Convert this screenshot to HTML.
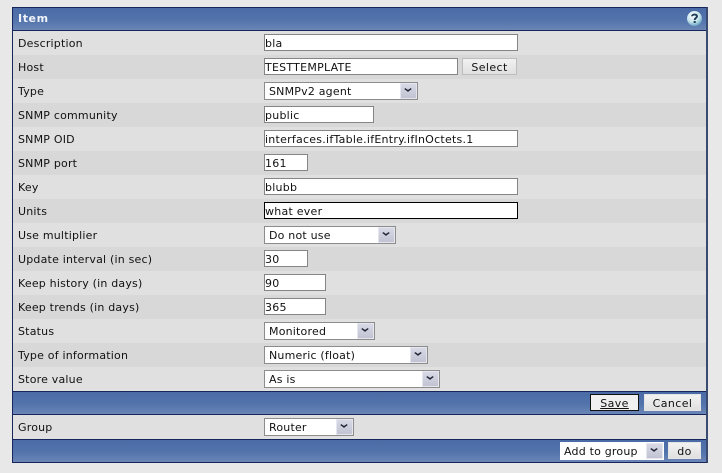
<!DOCTYPE html>
<html><head><meta charset="utf-8">
<style>
html,body{margin:0;padding:0;width:722px;height:473px;overflow:hidden;background:#e8e8e8;font-family:"DejaVu Sans","Liberation Sans",sans-serif;font-size:11px;color:#111;letter-spacing:.2px}
div{position:absolute;box-sizing:border-box;white-space:pre}
.f{background:#fff;border:1px solid #858585;height:17px;left:264px;line-height:17px;padding-left:0;color:#111;letter-spacing:.25px}
.s{background:#fff;border:1px solid #8c8c8c;height:18px;left:264px;line-height:18px;padding-left:4px;color:#111}
.a{position:absolute;right:0;top:0;width:17px;height:16px;background:linear-gradient(#d8d9e6,#c2c3d2);border:1px solid #e6e6ee;box-sizing:border-box}
.a:after{content:"";position:absolute;left:4px;top:2px;width:6px;height:6px;border:solid #1f2436;border-width:0 2px 2px 0;transform:scale(.9,.65) rotate(45deg);box-sizing:border-box}
.b{background:linear-gradient(#f2f2f2,#e0e0e0);height:17px;line-height:17px;text-align:center;border:1px solid #bdbdbd;color:#111;letter-spacing:.4px}
.r{left:13px;width:693px;height:24px}
.l{left:18px;line-height:18px}
.bar{left:13px;width:693px;background:linear-gradient(#4a6ba6,#5273ab 55%,#6b86b6);border-top:1px solid #16265c;border-bottom:1px solid #16265c}
</style></head><body>
<div style="left:12px;top:7px;width:696px;height:456px;background:#dcdcdc;border:1px solid #16265c;border-width:1px 2px 1px 1px;border-color:#16265c #3a4a70 #16265c #16265c"></div>

<div class="bar" style="top:7px;height:24px;border-top:1px solid #16265c"></div>
<div style="left:18px;top:10px;line-height:18px;font-weight:bold;color:#f0f4fa;letter-spacing:.6px">Item</div>
<svg style="position:absolute;left:686px;top:10px" width="17" height="17" viewBox="0 0 17 17"><defs><radialGradient id="g" cx=".4" cy=".3" r=".8"><stop offset="0" stop-color="#fff"/><stop offset=".55" stop-color="#c4e3ea"/><stop offset="1" stop-color="#4e95bb"/></radialGradient></defs><circle cx="8.5" cy="8.5" r="7.5" fill="url(#g)"/><path d="M6 6.2C6 4.2 11 3.9 11 6.3C11 8 8.7 7.9 8.7 10" fill="none" stroke="#1c3b55" stroke-width="1.9"/><rect x="7.7" y="11" width="2" height="2" fill="#1c3b55"/></svg>

<div class="r" style="top:31px;background:#e0e0e0"></div>
<div class="r" style="top:55px;background:#d8d8d8"></div>
<div class="r" style="top:79px;background:#e0e0e0"></div>
<div class="r" style="top:103px;background:#d8d8d8"></div>
<div class="r" style="top:127px;background:#e0e0e0"></div>
<div class="r" style="top:151px;background:#d8d8d8"></div>
<div class="r" style="top:175px;background:#e0e0e0"></div>
<div class="r" style="top:199px;background:#d8d8d8"></div>
<div class="r" style="top:223px;background:#e0e0e0"></div>
<div class="r" style="top:247px;background:#d8d8d8"></div>
<div class="r" style="top:271px;background:#e0e0e0"></div>
<div class="r" style="top:295px;background:#d8d8d8"></div>
<div class="r" style="top:319px;background:#e0e0e0"></div>
<div class="r" style="top:343px;background:#d8d8d8"></div>
<div class="r" style="top:367px;background:#e0e0e0"></div>

<div class="l" style="top:35px">Description</div>
<div class="l" style="top:59px">Host</div>
<div class="l" style="top:83px">Type</div>
<div class="l" style="top:107px">SNMP community</div>
<div class="l" style="top:131px">SNMP OID</div>
<div class="l" style="top:155px">SNMP port</div>
<div class="l" style="top:179px">Key</div>
<div class="l" style="top:203px">Units</div>
<div class="l" style="top:227px">Use multiplier</div>
<div class="l" style="top:251px">Update interval (in sec)</div>
<div class="l" style="top:275px">Keep history (in days)</div>
<div class="l" style="top:299px">Keep trends (in days)</div>
<div class="l" style="top:323px">Status</div>
<div class="l" style="top:347px">Type of information</div>
<div class="l" style="top:371px">Store value</div>

<div class="f" style="top:34px;width:254px">bla</div>
<div class="f" style="top:58px;width:194px">TESTTEMPLATE</div>
<div class="b" style="left:462px;top:58px;width:55px">Select</div>
<div class="s" style="top:82px;width:154px">SNMPv2 agent<span class="a"></span></div>
<div class="f" style="top:106px;width:110px">public</div>
<div class="f" style="top:130px;width:254px">interfaces.ifTable.ifEntry.ifInOctets.1</div>
<div class="f" style="top:154px;width:44px">161</div>
<div class="f" style="top:178px;width:254px">blubb</div>
<div class="f" style="top:202px;width:254px;border-color:#000">what ever</div>
<div class="s" style="top:226px;width:132px">Do not use<span class="a"></span></div>
<div class="f" style="top:250px;width:44px">30</div>
<div class="f" style="top:274px;width:62px">90</div>
<div class="f" style="top:298px;width:62px">365</div>
<div class="s" style="top:322px;width:111px">Monitored<span class="a"></span></div>
<div class="s" style="top:346px;width:164px">Numeric (float)<span class="a"></span></div>
<div class="s" style="top:370px;width:176px">As is<span class="a"></span></div>

<div class="bar" style="top:391px;height:24px"></div>
<div class="b" style="left:590px;top:394px;width:49px;background:#f0f0f0;border:1px solid #111;text-decoration:underline">Save</div>
<div class="b" style="left:644px;top:394px;width:57px;border-color:#e4e4e4">Cancel</div>

<div class="r" style="top:415px;background:#e0e0e0"></div>
<div class="l" style="top:419px">Group</div>
<div class="s" style="top:418px;width:90px">Router<span class="a"></span></div>

<div class="bar" style="top:439px;height:24px"></div>
<div class="s" style="left:560px;top:442px;width:104px;border-color:#fff;padding-left:3px">Add to group<span class="a"></span></div>
<div class="b" style="left:668px;top:442px;width:33px;border-color:#e4e4e4">do</div>
</body></html>
